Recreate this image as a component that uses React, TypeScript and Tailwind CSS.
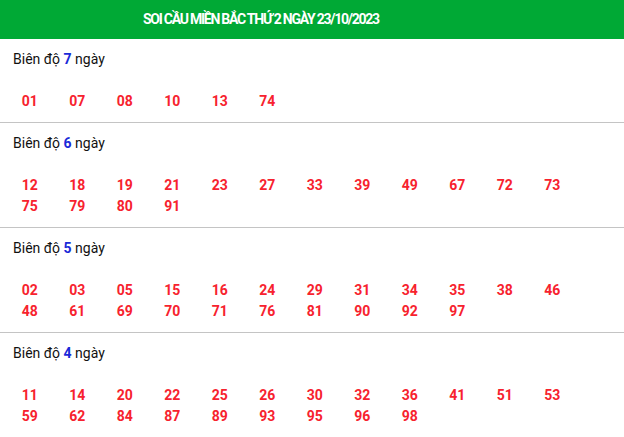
const sections: { days: number; nums: string[] }[] = [
  { days: 7, nums: ["01", "07", "08", "10", "13", "74"] },
  {
    days: 6,
    nums: ["12", "18", "19", "21", "23", "27", "33", "39", "49", "67", "72", "73", "75", "79", "80", "91"],
  },
  {
    days: 5,
    nums: [
      "02", "03", "05", "15", "16", "24", "29", "31", "34", "35", "38", "46",
      "48", "61", "69", "70", "71", "76", "81", "90", "92", "97",
    ],
  },
  {
    days: 4,
    nums: [
      "11", "14", "20", "22", "25", "26", "30", "32", "36", "41", "51", "53",
      "59", "62", "84", "87", "89", "93", "95", "96", "98",
    ],
  },
];

export default function App() {
  return (
    <div className="w-[624px] bg-white font-['Roboto',sans-serif]">
      <div className="flex h-[39px] items-center bg-[#00a935] pl-[143px]">
        <h1 className="whitespace-nowrap text-[14px] font-bold tracking-[-1.25px] text-white">
          SOI CẦU MIỀN BẮC THỨ 2 NGÀY 23/10/2023
        </h1>
      </div>
      {sections.map((s, i) => (
        <div
          key={s.days}
          className={i < sections.length - 1 ? "border-b border-[#c4c4c4] pb-[10px]" : "pb-[10px]"}
        >
          <p className="pl-[13px] pt-[10px] text-[14px] leading-[20px] text-[#111]">
            Biên độ <b className="text-[#1a2ad8]">{s.days}</b> ngày
          </p>
          <div className="mt-[22px] grid grid-cols-[repeat(12,47.5px)] pl-[6px]">
            {s.nums.map((n) => (
              <span
                key={n}
                className="h-[21px] text-center text-[14px] font-bold leading-[21px] text-[#f7222e]"
              >
                {n}
              </span>
            ))}
          </div>
        </div>
      ))}
    </div>
  );
}
